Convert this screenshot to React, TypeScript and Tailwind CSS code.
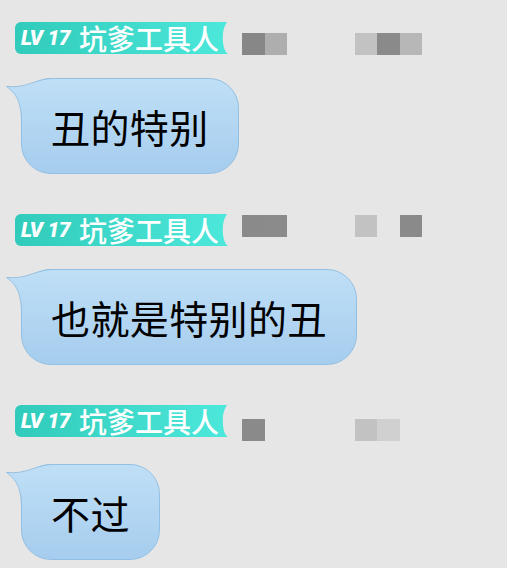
import React from "react";

type Msg = {
  text: string;
  blocks: string[];
  blockTop: number;
};

const cjk = { fontFamily: '"Noto Sans CJK SC", "Noto Sans", sans-serif' };

const messages: Msg[] = [
  { text: "丑的特别", blocks: ["#878787", "#aeaeae", "", "#c2c2c2", "#8a8a8a", "#b7b7b7"], blockTop: 11 },
  { text: "也就是特别的丑", blocks: ["#8a8a8a", "#8b8b8b", "", "#c2c2c2", "", "#8a8a8a"], blockTop: 1 },
  { text: "不过", blocks: ["#8a8a8a", "", "", "#c2c2c2", "#d0d0d0", ""], blockTop: 14 },
];

const slotWidths = ["w-[23px]", "w-[22px]", "w-[68px]", "w-[22px]", "w-[23px]", "w-[22px]"];

function Badge() {
  return (
    <div className="flex h-[32px] w-[213px] shrink-0">
      <div className="flex h-full flex-1 items-center rounded-l-[6px] bg-gradient-to-r from-[#31cbbb] to-[#4be7da] pl-[6px]">
        <span
          className="text-[21px] font-black italic leading-none tracking-[-0.5px] text-white"
          style={{ fontFamily: "Roboto, sans-serif" }}
        >
          LV<span className="ml-[5px]">17</span>
        </span>
        <span className="ml-[9px] text-[28px] font-medium leading-none text-white" style={cjk}>
          坑爹工具人
        </span>
      </div>
      <svg width="8" height="32" viewBox="0 0 8 32" className="block">
        <path d="M0 0 H7 C3 6 2.5 12 3 20 C3.5 26 5 30 8 32 H0 Z" fill="#4be7da" />
      </svg>
    </div>
  );
}

function Bubble({ text, idx }: { text: string; idx: number }) {
  const gid = `bub${idx}`;
  return (
    <div className="relative ml-[6px] mt-[23px] self-start">
      <div
        className="flex h-[96px] items-center rounded-[30px] border border-[#92c0e4] bg-gradient-to-b from-[#bfdff6] to-[#a6cdee] px-[29px] text-[39px] leading-none tracking-[0.4px] text-black"
        style={cjk}
      >
        {text}
      </div>
      <svg width="46" height="46" viewBox="0 0 46 46" className="absolute left-[-15px] top-0">
        <defs>
          <linearGradient id={gid} x1="0" y1="0" x2="0" y2="96" gradientUnits="userSpaceOnUse">
            <stop offset="0" stopColor="#bfdff6" />
            <stop offset="1" stopColor="#a6cdee" />
          </linearGradient>
        </defs>
        <path d="M46 1 C30 1 22 11 1 9 C10 15 16 24 16 44 L46 44 Z" fill={`url(#${gid})`} />
        <path d="M46 0.5 C30 0.5 22 10.5 0.5 8.5 C10 15 15.5 24 15.5 44" fill="none" stroke="#92c0e4" strokeWidth="1" />
      </svg>
    </div>
  );
}

export default function App() {
  return (
    <div className="h-[568px] w-full overflow-hidden bg-[#e6e6e6] pl-[15px] pt-[22px]">
      {messages.map((m, i) => (
        <div key={i} className={`flex flex-col ${i > 0 ? "mt-[40px]" : ""}`}>
          <div className="flex items-start">
            <Badge />
            <div className="ml-[14px] flex" style={{ marginTop: m.blockTop }}>
              {m.blocks.map((c, j) => (
                <div key={j} className={`h-[22px] ${slotWidths[j]}`} style={{ backgroundColor: c || "transparent" }} />
              ))}
            </div>
          </div>
          <Bubble text={m.text} idx={i} />
        </div>
      ))}
    </div>
  );
}
